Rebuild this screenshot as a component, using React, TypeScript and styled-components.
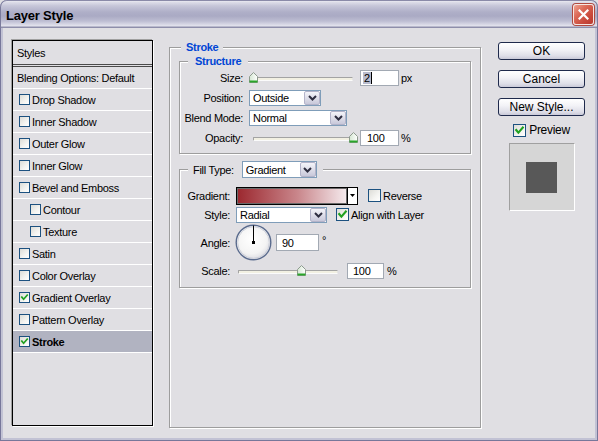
import React from "react";
import styled, { createGlobalStyle } from "styled-components";

const FACE = "#e0dfe3";

const GlobalStyle = createGlobalStyle`
  * { box-sizing: border-box; }
  html, body { margin: 0; padding: 0; background: ${FACE}; }
  body {
    font-family: "Liberation Sans", Arial, sans-serif;
    font-size: 11px;
    letter-spacing: -0.3px;
    color: #000;
  }
  #root { width: 598px; height: 441px; overflow: hidden; }
`;

/* ---------- window frame ---------- */

const Window = styled.div`
  width: 598px;
  height: 441px;
  display: flex;
  flex-direction: column;
  padding: 0 3px 3px;
  background: #c2c2d4;
  box-shadow: inset 0 0 0 1px #77779a;
  border-radius: 7px 7px 0 0;
  overflow: hidden;
`;

const TitleBar = styled.div`
  flex: none;
  height: 28px;
  margin: 0 -3px;
  padding: 1px 4px 0 6px;
  display: flex;
  align-items: center;
  justify-content: space-between;
  border-radius: 7px 7px 0 0;
  background: linear-gradient(
    to bottom,
    #f8f8fb 0px,
    #dedee9 2px,
    #c5c5d8 6px,
    #afafc8 12px,
    #aaaac4 16px,
    #bdbdd2 21px,
    #dcdce8 25px,
    #e4e4ee 26px,
    #8e8eaa 27px,
    #8e8eaa 28px
  );
  box-shadow: inset 1px 0 0 #7b7b9c, inset -1px 0 0 #7b7b9c, inset 0 1px 0 #8a8aa8;
`;

const Title = styled.span`
  padding-top: 2px;
  font-size: 13px;
  font-weight: bold;
  letter-spacing: -0.2px;
  color: #000;
`;

const CloseButton = styled.div`
  width: 21px;
  height: 21px;
  display: flex;
  align-items: center;
  justify-content: center;
  border-radius: 3px;
  border: 1px solid #f6e6e2;
  box-shadow: 0 0 0 1px #b04a40;
  background: linear-gradient(135deg, #eea291 0%, #dc6a58 35%, #c94a3c 70%, #b93a30 100%);
`;

const Body = styled.div`
  flex: 1;
  display: flex;
  align-items: flex-start;
  padding: 12px 0 0 9px;
  background: ${FACE};
`;

/* ---------- styles list ---------- */

const StylesPanel = styled.div`
  flex: none;
  width: 141px;
  height: 386px;
  display: flex;
  flex-direction: column;
  border: 1px solid #000;
  box-shadow: -1px -1px 0 #a0a0a0, 1px 1px 0 #fff;
`;

const PanelHeader = styled.div`
  flex: none;
  height: 23px;
  display: flex;
  align-items: center;
  padding-left: 4px;
`;

const DoubleRule = styled.div`
  flex: none;
  height: 3px;
  border-top: 1px solid #4a4a4a;
  border-bottom: 1px solid #4a4a4a;
`;

const StyleRow = styled.div<{ $pad: number; $selected?: boolean }>`
  flex: none;
  height: 22px;
  display: flex;
  align-items: center;
  gap: 2px;
  padding-left: ${(p) => p.$pad}px;
  border-bottom: 1px solid #fff;
  background: ${(p) => (p.$selected ? "#b1b3c1" : "transparent")};
  font-weight: ${(p) => (p.$selected ? "bold" : "normal")};
  white-space: nowrap;
`;

/* ---------- checkbox ---------- */

const CheckFrame = styled.span<{ $size: number }>`
  flex: none;
  width: ${(p) => p.$size}px;
  height: ${(p) => p.$size}px;
  display: flex;
  align-items: center;
  justify-content: center;
  border: 1px solid #1c5180;
  background: linear-gradient(135deg, #dcdcd7 0%, #f4f4f1 60%, #ffffff 100%);
  svg { display: block; }
`;

function CheckBox({ size = 13, checked = false }: { size?: number; checked?: boolean }) {
  const inner = size - 2;
  return (
    <CheckFrame $size={size}>
      {checked && (
        <svg width={inner} height={inner} viewBox="0 0 11 11">
          <polyline
            points="2.2,5 4.4,7.6 8.8,2.6"
            fill="none"
            stroke="#21a121"
            strokeWidth="2.1"
            strokeLinecap="square"
          />
        </svg>
      )}
    </CheckFrame>
  );
}

const CheckLabel = styled.span<{ $ml?: number; $mt?: number; $font?: number; $gap?: number }>`
  display: flex;
  align-items: center;
  gap: ${(p) => p.$gap ?? 2}px;
  margin-left: ${(p) => p.$ml ?? 0}px;
  margin-top: ${(p) => p.$mt ?? 0}px;
  font-size: ${(p) => p.$font ?? 11}px;
  white-space: nowrap;
`;

/* ---------- group boxes ---------- */

const Group = styled.fieldset<{ $w: number; $h?: number; $mt?: number; $ml?: number }>`
  flex: none;
  margin: ${(p) => p.$mt ?? 0}px 0 0 ${(p) => p.$ml ?? 0}px;
  padding: 0;
  min-width: 0;
  width: ${(p) => p.$w}px;
  ${(p) => (p.$h ? `height: ${p.$h}px;` : "")}
  border: 1px solid #9d9d9d;
  box-shadow: inset 1px 1px 0 #fff, 1px 1px 0 #fff;
`;

const Caption = styled.legend<{ $offset: number; $pad: number }>`
  margin-left: ${(p) => p.$offset}px;
  padding: 0 ${(p) => p.$pad}px;
  height: 14px;
  line-height: 14px;
  font-weight: bold;
  color: #0046d5;
  background: ${FACE};
`;

const ComboCaption = styled.legend`
  margin-left: 8px;
  padding: 0 6px 0 5px;
  height: 17px;
  background: ${FACE};
`;

const CaptionInner = styled.span`
  display: inline-flex;
  align-items: center;
  gap: 8px;
  height: 17px;
`;

const GroupStack = styled.div`
  display: flex;
  flex-direction: column;
  padding: 0 9px;
`;

const GroupRows = styled.div<{ $pt: number; $pb: number }>`
  display: flex;
  flex-direction: column;
  padding: ${(p) => p.$pt}px 0 ${(p) => p.$pb}px;
`;

const FormRow = styled.div<{ $label: number; $h: number }>`
  display: grid;
  grid-template-columns: ${(p) => p.$label}px auto;
  column-gap: 6px;
  align-items: center;
  height: ${(p) => p.$h}px;
`;

const Label = styled.span`
  text-align: right;
  white-space: nowrap;
`;

const Controls = styled.div`
  display: flex;
  align-items: center;
`;

const Unit = styled.span<{ $ml: number; $top?: boolean }>`
  margin-left: ${(p) => p.$ml}px;
  align-self: ${(p) => (p.$top ? "flex-start" : "center")};
  padding-top: ${(p) => (p.$top ? 10 : 0)}px;
  white-space: nowrap;
`;

/* ---------- text fields & combos ---------- */

const TextBox = styled.div<{ $w: number; $h?: number; $pad?: number; $ml?: number }>`
  flex: none;
  width: ${(p) => p.$w}px;
  height: ${(p) => p.$h ?? 16}px;
  margin-left: ${(p) => p.$ml ?? 0}px;
  display: flex;
  align-items: center;
  padding-left: ${(p) => p.$pad ?? 5}px;
  border: 1px solid #a2a9b3;
  background: #fff;
  white-space: nowrap;
`;

const Selected = styled.span`
  background: #b7bbcd;
  padding: 0 1px;
  border-right: 1px solid #000;
  line-height: 12px;
`;

const SelectBox = styled.div<{ $w: number; $h?: number }>`
  flex: none;
  width: ${(p) => p.$w}px;
  height: ${(p) => p.$h ?? 16}px;
  display: flex;
  align-items: stretch;
  padding-left: 3px;
  border: 1px solid #7f9db9;
  background: #fff;
`;

const SelectText = styled.span`
  flex: 1;
  display: flex;
  align-items: center;
  white-space: nowrap;
  overflow: hidden;
`;

const DropButton = styled.span`
  flex: none;
  width: 16px;
  display: flex;
  align-items: center;
  justify-content: center;
  border: 1px solid #b3b3c9;
  border-radius: 2px;
  background: linear-gradient(#f4f4f9, #dadae6 60%, #c8c8da);
`;

function Combo({ w, h, value }: { w: number; h?: number; value: string }) {
  return (
    <SelectBox $w={w} $h={h}>
      <SelectText>{value}</SelectText>
      <DropButton>
        <svg width="9" height="6" viewBox="0 0 9 6">
          <polyline points="1,1 4.5,4.5 8,1" fill="none" stroke="#2e2e40" strokeWidth="2" />
        </svg>
      </DropButton>
    </SelectBox>
  );
}

/* ---------- gradient picker ---------- */

const GradientField = styled.div`
  flex: none;
  width: 122px;
  height: 18px;
  display: flex;
  border: 1px solid #000;
  background: #fff;
`;

const GradientSwatch = styled.div`
  flex: 1;
  border: 1px solid #6a6a6a;
  background: linear-gradient(to right, #9c2930 0%, #c9868b 55%, #f4e9ec 100%);
`;

const GradientArrow = styled.div`
  flex: none;
  width: 10px;
  display: flex;
  align-items: center;
  justify-content: center;
  border-left: 1px solid #000;
  background: #fff;
`;

/* ---------- slider ---------- */

const SliderBox = styled.div<{ $w: number }>`
  position: relative;
  flex: none;
  width: ${(p) => p.$w}px;
  height: 12px;
`;

const SliderTrack = styled.div<{ $inset: number }>`
  margin: 5px ${(p) => p.$inset}px 0;
  height: 4px;
  border: 1px solid;
  border-color: #a3a3a3 #e4e4e4 #fbfbfb #a3a3a3;
  border-radius: 1px;
  background: #f2f0e2;
`;

const Thumb = styled.svg`
  position: absolute;
  top: 0;
  display: block;
`;

function Slider({ w, inset, value }: { w: number; inset: number; value: number }) {
  const center = inset + value * (w - 2 * inset);
  return (
    <SliderBox $w={w}>
      <SliderTrack $inset={inset} />
      <Thumb width="9" height="11" viewBox="0 0 9 11" style={{ left: Math.round(center - 4.5) }}>
        <defs>
          <linearGradient id="thumbFill" x1="0" y1="0" x2="1" y2="0">
            <stop offset="0" stopColor="#d4e6d2" />
            <stop offset="1" stopColor="#ffffff" />
          </linearGradient>
        </defs>
        <polygon points="0.5,4.5 4.5,0.5 8.5,4.5 8.5,10.5 0.5,10.5" fill="url(#thumbFill)" stroke="#8e9a8e" />
        <rect x="0.5" y="8.5" width="8" height="2" fill="#2aa52a" />
      </Thumb>
    </SliderBox>
  );
}

/* ---------- angle dial ---------- */

const DialFace = styled.svg`
  display: block;
  flex: none;
  margin-left: -1px;
`;

function AngleDial() {
  return (
    <DialFace width="37" height="37" viewBox="0 0 37 37">
      <defs>
        <radialGradient id="dialFace" cx="0.45" cy="0.4" r="0.6">
          <stop offset="0" stopColor="#ffffff" />
          <stop offset="0.7" stopColor="#f4f4f4" />
          <stop offset="1" stopColor="#dcdce2" />
        </radialGradient>
      </defs>
      <circle cx="18.5" cy="18.5" r="17.3" fill="url(#dialFace)" stroke="#5b6c8e" strokeWidth="1.4" />
      <circle cx="18.5" cy="18.5" r="15.8" fill="none" stroke="#c7cad6" strokeWidth="0.8" />
      <line x1="18.5" y1="18.5" x2="18.5" y2="1.5" stroke="#000" strokeWidth="1" />
      <rect x="17" y="17" width="3" height="3" fill="#000" />
    </DialFace>
  );
}

/* ---------- right column ---------- */

const ActionColumn = styled.div`
  flex: none;
  width: 87px;
  margin: 2px 0 0 17px;
  display: flex;
  flex-direction: column;
  align-items: center;
`;

const PushButton = styled.div<{ $mt?: number }>`
  width: 87px;
  height: 18px;
  margin-top: ${(p) => p.$mt ?? 0}px;
  display: flex;
  align-items: center;
  justify-content: center;
  border: 1px solid #1f2a4c;
  border-radius: 3px;
  background: linear-gradient(#ffffff 0%, #f3f3f7 40%, #dedee8 80%, #c9c9d8 100%);
  font-size: 12px;
  letter-spacing: 0;
`;

const PreviewWell = styled.div`
  width: 66px;
  height: 68px;
  margin-top: 6px;
  display: flex;
  align-items: center;
  justify-content: center;
  background: #d6d6d6;
  border: 1px solid;
  border-color: #a0a0a0 #ffffff #ffffff #a0a0a0;
`;

const PreviewSwatch = styled.div`
  width: 31px;
  height: 31px;
  background: #585858;
`;

/* ---------- data ---------- */

type Effect = { name: string; checked?: boolean; indent?: boolean; selected?: boolean };

const effects: Effect[] = [
  { name: "Drop Shadow" },
  { name: "Inner Shadow" },
  { name: "Outer Glow" },
  { name: "Inner Glow" },
  { name: "Bevel and Emboss" },
  { name: "Contour", indent: true },
  { name: "Texture", indent: true },
  { name: "Satin" },
  { name: "Color Overlay" },
  { name: "Gradient Overlay", checked: true },
  { name: "Pattern Overlay" },
  { name: "Stroke", checked: true, selected: true },
];

export default function App() {
  return (
    <>
      <GlobalStyle />
      <Window>
        <TitleBar>
          <Title>Layer Style</Title>
          <CloseButton>
            <svg width="11" height="11" viewBox="0 0 11 11">
              <path d="M1.5 1.5 L9.5 9.5 M9.5 1.5 L1.5 9.5" stroke="#fff" strokeWidth="2.2" strokeLinecap="square" />
            </svg>
          </CloseButton>
        </TitleBar>

        <Body>
          <StylesPanel>
            <PanelHeader>Styles</PanelHeader>
            <DoubleRule />
            <StyleRow $pad={4}>Blending Options: Default</StyleRow>
            {effects.map((e) => (
              <StyleRow key={e.name} $pad={e.indent ? 17 : 6} $selected={e.selected}>
                <CheckBox size={11} checked={e.checked} />
                {e.name}
              </StyleRow>
            ))}
          </StylesPanel>

          <Group $w={312} $h={388} $ml={16}>
            <Caption $offset={11} $pad={5}>Stroke</Caption>
            <GroupStack>
              <Group $w={292}>
                <Caption $offset={8} $pad={7}>Structure</Caption>
                <GroupRows $pt={0} $pb={5}>
                  <FormRow $label={63} $h={20}>
                    <Label>Size:</Label>
                    <Controls>
                      <Slider w={108} inset={4} value={0} />
                      <TextBox $w={39} $pad={2} $ml={3}>
                        <Selected>2</Selected>
                      </TextBox>
                      <Unit $ml={2}>px</Unit>
                    </Controls>
                  </FormRow>
                  <FormRow $label={63} $h={20}>
                    <Label>Position:</Label>
                    <Controls>
                      <Combo w={72} value="Outside" />
                    </Controls>
                  </FormRow>
                  <FormRow $label={63} $h={20}>
                    <Label>Blend Mode:</Label>
                    <Controls>
                      <Combo w={98} value="Normal" />
                    </Controls>
                  </FormRow>
                  <FormRow $label={63} $h={20}>
                    <Label>Opacity:</Label>
                    <Controls>
                      <Slider w={108} inset={4} value={1} />
                      <TextBox $w={39} $pad={6} $ml={3}>100</TextBox>
                      <Unit $ml={2}>%</Unit>
                    </Controls>
                  </FormRow>
                </GroupRows>
              </Group>

              <Group $w={292} $mt={7}>
                <ComboCaption>
                  <CaptionInner>
                    Fill Type:
                    <Combo w={75} h={17} value="Gradient" />
                  </CaptionInner>
                </ComboCaption>
                <GroupRows $pt={8} $pb={6}>
                  <FormRow $label={50} $h={19}>
                    <Label>Gradient:</Label>
                    <Controls>
                      <GradientField>
                        <GradientSwatch />
                        <GradientArrow>
                          <svg width="5" height="3" viewBox="0 0 5 3">
                            <polygon points="0,0 5,0 2.5,3" fill="#000" />
                          </svg>
                        </GradientArrow>
                      </GradientField>
                      <CheckLabel $ml={10}>
                        <CheckBox size={13} />
                        Reverse
                      </CheckLabel>
                    </Controls>
                  </FormRow>
                  <FormRow $label={50} $h={19}>
                    <Label>Style:</Label>
                    <Controls>
                      <Combo w={91} value="Radial" />
                      <CheckLabel $ml={9}>
                        <CheckBox size={13} checked />
                        Align with Layer
                      </CheckLabel>
                    </Controls>
                  </FormRow>
                  <FormRow $label={50} $h={36}>
                    <Label>Angle:</Label>
                    <Controls>
                      <AngleDial />
                      <TextBox $w={43} $h={17} $ml={4}>90</TextBox>
                      <Unit $ml={3} $top>°</Unit>
                    </Controls>
                  </FormRow>
                  <FormRow $label={50} $h={21}>
                    <Label>Scale:</Label>
                    <Controls>
                      <Slider w={104} inset={2} value={0.63} />
                      <TextBox $w={37} $ml={7}>100</TextBox>
                      <Unit $ml={3}>%</Unit>
                    </Controls>
                  </FormRow>
                </GroupRows>
              </Group>
            </GroupStack>
          </Group>

          <ActionColumn>
            <PushButton>OK</PushButton>
            <PushButton $mt={10}>Cancel</PushButton>
            <PushButton $mt={10}>New Style...</PushButton>
            <CheckLabel $font={12} $mt={7} $gap={3}>
              <CheckBox size={13} checked />
              Preview
            </CheckLabel>
            <PreviewWell>
              <PreviewSwatch />
            </PreviewWell>
          </ActionColumn>
        </Body>
      </Window>
    </>
  );
}
